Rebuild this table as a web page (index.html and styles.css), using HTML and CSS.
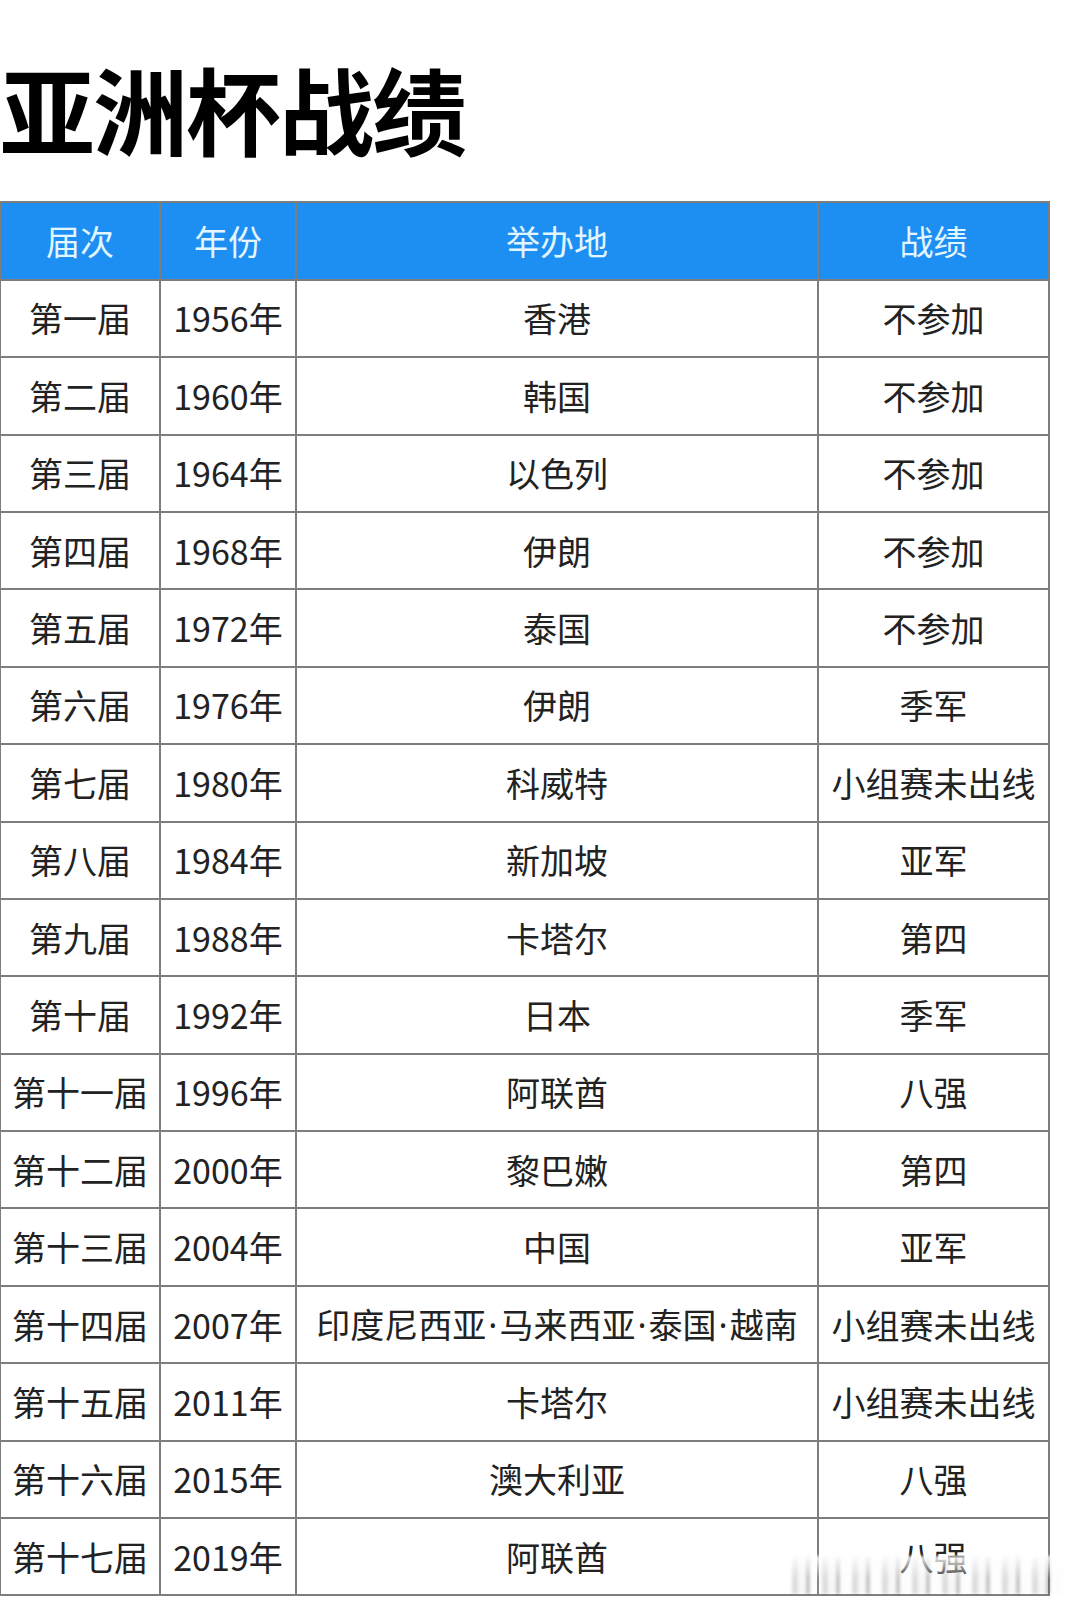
FILE: index.html
```html
<!DOCTYPE html>
<html lang="zh-CN">
<head>
<meta charset="utf-8">
<title>亚洲杯战绩</title>
<link rel="stylesheet" href="styles.css">
</head>
<body>
<div class="page">
  <h1 class="title">亚洲杯战绩</h1>
  <div class="table-wrap">
    <table class="results">
      <colgroup>
        <col class="c1"><col class="c2"><col class="c3"><col class="c4">
      </colgroup>
      <thead>
        <tr><th>届次</th><th>年份</th><th>举办地</th><th>战绩</th></tr>
      </thead>
      <tbody>
        <tr><td>第一届</td><td>1956年</td><td>香港</td><td>不参加</td></tr>
        <tr><td>第二届</td><td>1960年</td><td>韩国</td><td>不参加</td></tr>
        <tr><td>第三届</td><td>1964年</td><td>以色列</td><td>不参加</td></tr>
        <tr><td>第四届</td><td>1968年</td><td>伊朗</td><td>不参加</td></tr>
        <tr><td>第五届</td><td>1972年</td><td>泰国</td><td>不参加</td></tr>
        <tr><td>第六届</td><td>1976年</td><td>伊朗</td><td>季军</td></tr>
        <tr><td>第七届</td><td>1980年</td><td>科威特</td><td>小组赛未出线</td></tr>
        <tr><td>第八届</td><td>1984年</td><td>新加坡</td><td>亚军</td></tr>
        <tr><td>第九届</td><td>1988年</td><td>卡塔尔</td><td>第四</td></tr>
        <tr><td>第十届</td><td>1992年</td><td>日本</td><td>季军</td></tr>
        <tr><td>第十一届</td><td>1996年</td><td>阿联酋</td><td>八强</td></tr>
        <tr><td>第十二届</td><td>2000年</td><td>黎巴嫩</td><td>第四</td></tr>
        <tr><td>第十三届</td><td>2004年</td><td>中国</td><td>亚军</td></tr>
        <tr><td>第十四届</td><td>2007年</td><td>印度尼西亚<span class="dot">·</span>马来西亚<span class="dot">·</span>泰国<span class="dot">·</span>越南</td><td>小组赛未出线</td></tr>
        <tr><td>第十五届</td><td>2011年</td><td>卡塔尔</td><td>小组赛未出线</td></tr>
        <tr><td>第十六届</td><td>2015年</td><td>澳大利亚</td><td>八强</td></tr>
        <tr><td>第十七届</td><td>2019年</td><td>阿联酋</td><td>八强</td></tr>
      </tbody>
    </table>
    <div class="watermark"></div>
  </div>
</div>
</body>
</html>
```

FILE: styles.css
```css
html, body {
  margin: 0;
  padding: 0;
  background: #ffffff;
}

body {
  font-family: "Noto Sans CJK SC", "Noto Sans", sans-serif;
  color: #222222;
}

.page {
  width: 1080px;
  height: 1607px;
  overflow: hidden;
}

.title {
  margin: 0;
  padding: 60px 0 0 0;
  height: 95px;
  font-size: 95px;
  line-height: 95px;
  font-weight: 700;
  letter-spacing: -2px;
  color: #000000;
}

.table-wrap {
  position: relative;
  margin-top: 46px;
  margin-left: -1px;
  width: 1049px;
}

.results {
  border-collapse: collapse;
  table-layout: fixed;
  width: 1049px;
  font-size: 34px;
}

.c1 { width: 160px; }
.c2 { width: 136px; }
.c3 { width: 522px; }
.c4 { width: 231px; }

.results th,
.results td {
  border: 2px solid #7d7d7d;
  height: 75.4px;
  padding: 0;
  text-align: center;
  vertical-align: middle;
  white-space: nowrap;
  line-height: 1;
}

.results th {
  background: #1e8ff2;
  color: #e2f6ff;
  font-weight: 400;
  height: 75.8px;
}

.results td {
  color: #222222;
}

.dot {
  font-family: "Noto Sans", "DejaVu Sans", sans-serif;
  padding: 0 2px;
}

.watermark {
  position: absolute;
  right: -14px;
  bottom: 2px;
  width: 270px;
  height: 38px;
  background:
    linear-gradient(to bottom, rgba(255,255,255,0.9), rgba(255,255,255,0) 60%),
    repeating-linear-gradient(to right,
      rgba(120,120,120,0.25) 0px, rgba(120,120,120,0.25) 6px,
      rgba(200,200,200,0.15) 6px, rgba(200,200,200,0.15) 14px,
      rgba(90,90,90,0.35) 14px, rgba(90,90,90,0.35) 18px,
      rgba(230,230,230,0.1) 18px, rgba(230,230,230,0.1) 30px);
  filter: blur(1.5px);
  pointer-events: none;
}
```
